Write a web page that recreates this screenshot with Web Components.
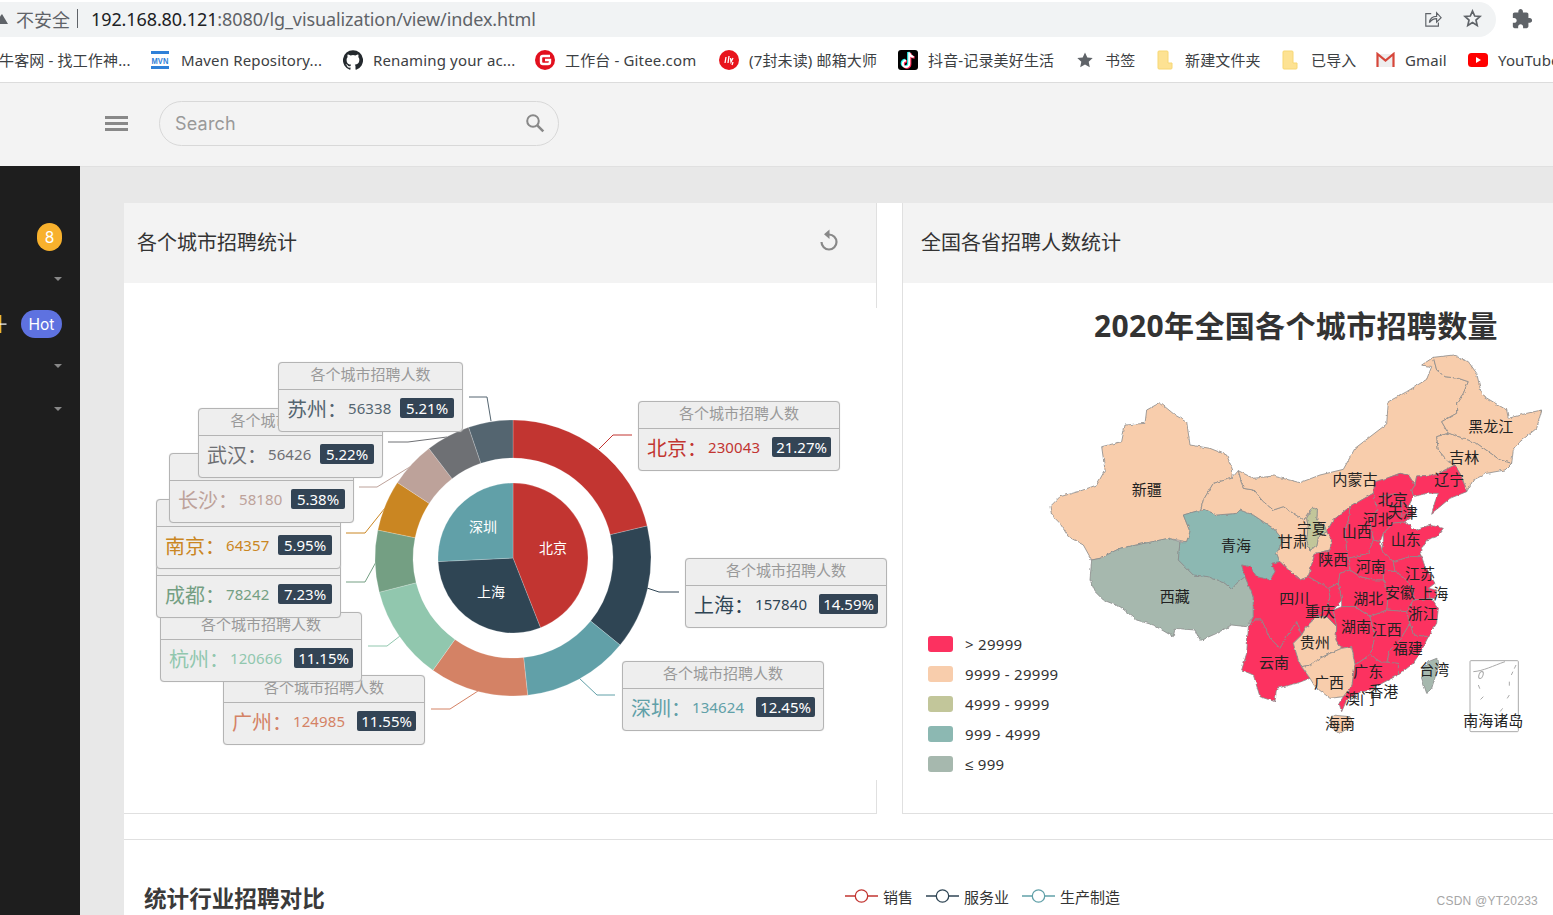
<!DOCTYPE html>
<html lang="zh">
<head>
<meta charset="utf-8">
<title>index</title>
<style>
  html, body { margin: 0; height: 915px; overflow: hidden; background: #fff; }
  body { font-family: "Noto Sans", "Noto Sans CJK SC", sans-serif; color: #333; }
</style>
</head>
<body>
<app-shell>
  <browser-bar>
    <book-mark w="152"><span>牛客网 - 找工作神...</span></book-mark>
    <book-mark w="192"><svg slot="icon" width="18" height="18" viewBox="0 0 18 18"><rect y="0" width="18" height="3" fill="#2f80d8"/><rect y="15" width="18" height="3" fill="#2f80d8"/><text x="9" y="12.8" text-anchor="middle" font-size="9.5" font-weight="700" textLength="17" lengthAdjust="spacingAndGlyphs" fill="#2f80d8" font-family="Liberation Sans">MVN</text></svg>Maven Repository...</book-mark>
    <book-mark w="192"><svg slot="icon" width="20" height="20" viewBox="0 0 24 24"><path fill="#24292e" d="M12 .3a12 12 0 0 0-3.8 23.4c.6.1.8-.3.8-.6v-2c-3.3.7-4-1.6-4-1.6-.6-1.4-1.4-1.8-1.4-1.8-1-.7.1-.7.1-.7 1.2 0 1.9 1.2 1.9 1.2 1 1.8 2.8 1.3 3.5 1 0-.8.4-1.3.7-1.6-2.7-.3-5.5-1.3-5.5-6 0-1.2.5-2.3 1.3-3.1-.2-.4-.6-1.6 0-3.2 0 0 1-.3 3.4 1.2a11.5 11.5 0 0 1 6 0c2.3-1.5 3.3-1.2 3.3-1.2.6 1.6.2 2.8 0 3.2.9.8 1.3 1.9 1.3 3.2 0 4.6-2.8 5.6-5.5 5.9.5.4.9 1 .9 2.2v3.3c0 .3.1.7.8.6A12 12 0 0 0 12 .3"/></svg>Renaming your ac...</book-mark>
    <book-mark w="184"><svg slot="icon" width="20" height="20" viewBox="0 0 20 20"><circle cx="10" cy="10" r="10" fill="#e2101e"/><path d="M15 6H8a2 2 0 0 0-2 2v4a2 2 0 0 0 2 2h5a2 2 0 0 0 2-2v-2H10" fill="none" stroke="#fff" stroke-width="2.4"/></svg>工作台 - Gitee.com</book-mark>
    <book-mark w="179"><svg slot="icon" width="20" height="20" viewBox="0 0 20 20"><circle cx="10" cy="10" r="10" fill="#e8141c"/><path d="M6 13l1-6M9 13l1-7M11.5 8l.5 4 2-4M14 12l-1 3" fill="none" stroke="#fff" stroke-width="1.3"/></svg>(7封未读) 邮箱大师</book-mark>
    <book-mark w="179"><svg slot="icon" width="20" height="20" viewBox="0 0 20 20"><rect width="20" height="20" rx="3" fill="#010101"/><g transform="translate(-2.500 -2.500) scale(1.250)"><path d="M11 4v9a2.6 2.6 0 1 1-2.6-2.6M11 4c.3 2 1.7 3.3 3.6 3.500" fill="none" stroke="#25f4ee" stroke-width="2" transform="translate(-.7 -.5)"/><path d="M11 4v9a2.6 2.6 0 1 1-2.6-2.6M11 4c.3 2 1.7 3.3 3.6 3.500" fill="none" stroke="#fe2c55" stroke-width="2" transform="translate(.7 .5)"/><path d="M11 4v9a2.6 2.6 0 1 1-2.6-2.6M11 4c.3 2 1.7 3.3 3.6 3.500" fill="none" stroke="#fff" stroke-width="1.600"/></g></svg>抖音-记录美好生活</book-mark>
    <book-mark w="80" i="18"><svg slot="icon" width="16" height="16" viewBox="0 0 16 16"><path fill="#5f6368" d="M8 .5l2.3 5 5.4.6-4 3.7 1.1 5.400L8 12.400l-4.800 2.800 1.100-5.400-4-3.700 5.400-.6z"/></svg>书签</book-mark>
    <book-mark w="125" i="18"><svg slot="icon" width="16" height="20" viewBox="0 0 16 20"><path fill="#fde293" stroke="#f7d774" d="M1 2a1 1 0 0 1 1-1h8a1 1 0 0 1 1 1v11h4v5a1 1 0 0 1-1 1H2a1 1 0 0 1-1-1z"/></svg>新建文件夹</book-mark>
    <book-mark w="94" i="19"><svg slot="icon" width="16" height="20" viewBox="0 0 16 20"><path fill="#fde293" stroke="#f7d774" d="M1 2a1 1 0 0 1 1-1h8a1 1 0 0 1 1 1v11h4v5a1 1 0 0 1-1 1H2a1 1 0 0 1-1-1z"/></svg>已导入</book-mark>
    <book-mark w="92" i="19"><svg slot="icon" width="19" height="15" viewBox="0 0 19 15"><path fill="#eee" d="M2 2h15v13H2z"/><path fill="none" stroke="#d6463a" stroke-width="2.200" d="M1.500 15V2l8 6.500L17.500 2v13"/></svg>Gmail</book-mark>
    <book-mark w="92"><svg slot="icon" width="20" height="14" viewBox="0 0 20 14"><rect width="20" height="14" rx="3.500" fill="#f00"/><path fill="#fff" d="M8 4l5 3-5 3z"/></svg>YouTube</book-mark>
  </browser-bar>
  <top-nav></top-nav>
  <div slot="main">
    <side-nav></side-nav>
    <page-body>
      <panel-card slot="left" caption="各个城市招聘统计" refresh><donut-chart></donut-chart></panel-card>
      <panel-card slot="right" caption="全国各省招聘人数统计" wide><china-map></china-map></panel-card>
      <compare-strip slot="bottom"></compare-strip>
    </page-body>
  </div>
</app-shell>

<script>
class AppShell extends HTMLElement {
  constructor() {
    super();
    this.attachShadow({ mode: "open" }).innerHTML = `
      <style>
        :host { display: flex; flex-direction: column; height: 915px; width: 1553px; overflow: hidden; }
        ::slotted([slot="main"]) { display: flex; flex: 1; min-height: 0; }
      </style>
      <slot></slot>
      <slot name="main"></slot>`;
  }
}

class BrowserBar extends HTMLElement {
  constructor() {
    super();
    this.attachShadow({ mode: "open" }).innerHTML = `
      <style>
        :host { display: block; background: #fff; }
        .top { display: flex; align-items: center; height: 37px; }
        .addr {
          width: 1496px; height: 35px; margin-top: 2px; background: #f1f3f4; padding-bottom: 2px;
          border-radius: 0 18px 18px 0; display: flex; align-items: center;
          font-size: 18px; color: #5f6368; white-space: nowrap; box-sizing: border-box;
        }
        .warn { width: 8px; height: 12px; margin-right: 8px; flex: none; }
        .sep { margin: 0 13px 0 7px; width: 1px; height: 19px; background: #5f6368; }
        .host { color: #202124; }
        .url { letter-spacing: -.1px; }
        .tools { margin-left: auto; display: flex; align-items: center; gap: 21px; padding-right: 14px; }
        .puzzle { margin-left: 15px; }
        .marks { display: flex; height: 45px; margin-left: -1px; border-bottom: 1px solid #dcdcdc; box-sizing: content-box; overflow: hidden; }
      </style>
      <div class="top">
        <div class="addr">
          <svg class="warn" viewBox="0 0 8 12"><path d="M-6 11 2 1 8 11z" fill="#5f6368"/></svg>
          <span>不安全</span><span class="sep"></span>
          <span class="url"><span class="host">192.168.80.121</span>:8080/lg_visualization/view/index.html</span>
          <div class="tools">
            <svg width="18" height="18" viewBox="0 0 20 20" fill="none" stroke="#5f6368" stroke-width="1.300"><path d="M8 4H2v14h14v-4"/><path d="M6 14c.5-4 3-7 8-7V3l5 5.500-5 5v-4c-3 0-6 1.500-8 4.500z"/></svg>
            <svg width="19" height="19" viewBox="0 0 19 19" fill="none" stroke="#5f6368" stroke-width="1.700"><path d="M9.500 2l2.200 5 5.300.5-4 3.600 1.200 5.300-4.700-2.800-4.700 2.800 1.200-5.300-4-3.600 5.300-.5z"/></svg>
          </div>
        </div>
        <svg class="puzzle" width="22" height="22" viewBox="0 0 24 24"><path fill="#5f6368" d="M20.500 11H19V7c0-1.100-.9-2-2-2h-4V3.500C13 2.120 11.880 1 10.500 1S8 2.120 8 3.500V5H4c-1.100 0-1.990.9-1.990 2v3.800H3.500c1.490 0 2.700 1.210 2.700 2.700s-1.210 2.700-2.700 2.700H2V20c0 1.100.9 2 2 2h3.800v-1.500c0-1.490 1.210-2.700 2.700-2.700 1.490 0 2.700 1.210 2.700 2.700V22H17c1.100 0 2-.9 2-2v-4h1.500c1.380 0 2.500-1.120 2.500-2.500S21.880 11 20.500 11z"/></svg>
      </div>
      <div class="marks"><slot></slot></div>`;
  }
}

class BookMark extends HTMLElement {
  constructor() {
    super();
    this.attachShadow({ mode: "open" }).innerHTML = `
      <style>
        :host {
          display: flex; align-items: center; flex: none; height: 45px;
          font-size: 15px; letter-spacing: .15px; color: #3c4043; white-space: nowrap;
        }
        .ico { display: flex; align-items: center; margin-right: 10px; width: 20px; }
        .ico:not(.on) { display: none; }
      </style>
      <span class="ico"><slot name="icon"></slot></span><slot></slot>`;
  }
  connectedCallback() {
    this.style.width = this.getAttribute("w") + "px";
    const ico = this.shadowRoot.querySelector(".ico");
    if (this.querySelector('[slot="icon"]')) ico.classList.add("on");
    if (this.hasAttribute("i")) ico.style.width = this.getAttribute("i") + "px";
  }
}

class TopNav extends HTMLElement {
  constructor() {
    super();
    this.attachShadow({ mode: "open" }).innerHTML = `
      <style>
        :host {
          display: flex; align-items: center; height: 84px; box-sizing: border-box;
          background: #f3f3f3; border-bottom: 1px solid #e0e0e0; padding: 0 0 3px 105px; flex: none;
        }
        .burger { width: 23px; height: 15px; display: flex; flex-direction: column; justify-content: space-between; margin-right: 31px; }
        .burger i { display: block; height: 3px; background: #888; }
        .search {
          width: 400px; height: 45px; box-sizing: border-box; border: 1px solid #d8d8d8; border-radius: 23px;
          display: flex; align-items: center; justify-content: space-between; padding: 0 13px 0 15px;
          font: 18px Inter, "Noto Sans", sans-serif; letter-spacing: .2px; color: #999;
        }
      </style>
      <div class="burger"><i></i><i></i><i></i></div>
      <div class="search"><span>Search</span>
        <svg width="20" height="20" viewBox="0 0 20 20" fill="none" stroke="#888" stroke-width="2"><circle cx="8" cy="8" r="5.800"/><path d="M12.300 12.300l6 6" stroke-width="2.600"/></svg>
      </div>`;
  }
}

class SideNav extends HTMLElement {
  constructor() {
    super();
    this.attachShadow({ mode: "open" }).innerHTML = `
      <style>
        :host {
          display: flex; flex-direction: column; align-items: flex-end; flex: none; width: 80px; margin-top: -1px;
          background: #1e1e1e; padding: 57px 18px 0 0; box-sizing: border-box;
        }
        .badge {
          height: 28px; border-radius: 14px; color: #fff; display: flex; align-items: center; justify-content: center;
          font: 15.500px Inter, "Noto Sans", sans-serif; box-sizing: border-box;
        }
        .eight { width: 25px; background: #f8b12d; border-radius: 12.500px; }
        .hot { width: 41px; background: #5e72e0; }
        .tri { width: 0; height: 0; border: 4px solid transparent; border-top: 4.500px solid #888; border-bottom: 0; }
        .row { display: flex; align-self: stretch; justify-content: space-between; align-items: center; margin-top: 29px; }
        .cut { display: block; }
      </style>
      <span class="badge eight">8</span>
      <span class="tri" style="margin-top:26px;margin-right:0"></span>
      <div class="row">
        <svg class="cut" width="7" height="18" viewBox="0 0 7 18"><path d="M0 0h1.300v18H0z" fill="#f2b632"/><path d="M0 8.500h6.500v1.200H0z" fill="#fff"/></svg>
        <span class="badge hot">Hot</span>
      </div>
      <span class="tri" style="margin-top:26px"></span>
      <span class="tri" style="margin-top:39px"></span>`;
  }
}

class PageBody extends HTMLElement {
  constructor() {
    super();
    this.attachShadow({ mode: "open" }).innerHTML = `
      <style>
        :host { display: block; flex: 1; background: #e8e8e8; padding: 36px 0 0 44px; min-width: 0; }
        .sheet { background: #fff; height: 100%; }
        .cards { display: flex; gap: 25px; height: 611px; }
        .gap { height: 25px; }
      </style>
      <div class="sheet">
        <div class="cards"><slot name="left"></slot><slot name="right"></slot></div>
        <div class="gap"></div>
        <slot name="bottom"></slot>
      </div>`;
  }
}

class PanelCard extends HTMLElement {
  constructor() {
    super();
    this.attachShadow({ mode: "open" }).innerHTML = `
      <style>
        :host { display: flex; flex-direction: column; width: 753px; box-sizing: border-box; border-bottom: 1px solid #e0e0e0; border-right: 1px solid #e0e0e0; flex: none; }
        :host([wide]) { width: 651px; border-right: 0; border-left: 1px solid #e0e0e0; }
        header {
          height: 80px; background: #f3f3f3; display: flex; align-items: center; justify-content: space-between;
          padding: 0 37px 3px 13px; font-size: 20px; color: #333; flex: none; box-sizing: border-box;
        }
        :host([wide]) header { padding-left: 18px; }
        .re { margin-top: -3px; }
        .body { flex: 1; min-height: 0; }
      </style>
      <header><span class="cap"></span>
        <svg class="re" width="20" height="24" viewBox="0 0 20 24" fill="none"><path d="M10 6.500a7.500 7.500 0 1 1-7.500 7.500" stroke="#888" stroke-width="2.200"/><path d="M10.500 1.500v9.500L5 6.300z" fill="#888"/></svg>
      </header>
      <div class="body"><slot></slot></div>`;
  }
  connectedCallback() {
    this.shadowRoot.querySelector(".cap").textContent = this.getAttribute("caption");
    if (!this.hasAttribute("refresh")) this.shadowRoot.querySelector(".re").remove();
  }
}

class CityLabel extends HTMLElement {
  constructor() {
    super();
    this.attachShadow({ mode: "open" }).innerHTML = `
      <style>
        :host {
          position: absolute; display: block; box-sizing: border-box; background: #eee; border: 1px solid #b4b4b4;
          border-radius: 4px; box-shadow: 0 0 1px #ccc;
        }
        .t {
          height: 26px; line-height: 23px; text-align: center; color: #999; font-size: 15px;
          border-bottom: 1px solid #b4b4b4; box-sizing: content-box;
        }
        .r { display: flex; align-items: center; height: 36px; padding: 0 8px 5px; white-space: nowrap; }
        .n { font-size: 20px; width: 61px; flex: none; }
        .v { font-size: 15px; letter-spacing: .1px; }
        .p {
          margin-left: auto; background: #334455; color: #fff; font-size: 15px; line-height: 20px;
          border-radius: 2px; padding: 0 4px; min-width: 46px; text-align: center;
        }
      </style>
      <div class="t">各个城市招聘人数</div>
      <div class="r"><span class="n"></span><span class="v"></span><span class="p"></span></div>`;
  }
  connectedCallback() {
    const s = this.shadowRoot;
    s.querySelector(".n").textContent = this.getAttribute("name") + "：";
    s.querySelector(".v").textContent = this.getAttribute("value");
    s.querySelector(".p").textContent = this.getAttribute("pct");
    s.querySelector(".r").style.color = this.getAttribute("color");
  }
}

class DonutChart extends HTMLElement {
  constructor() {
    super();
    this.attachShadow({ mode: "open" });
  }
  arc(cx, cy, r0, r1, a0, a1) {
    const p = (r, a) => `${(cx + r * Math.sin(a)).toFixed(2)} ${(cy - r * Math.cos(a)).toFixed(2)}`;
    const big = a1 - a0 > Math.PI ? 1 : 0;
    if (!r0) return `M${cx} ${cy}L${p(r1, a0)}A${r1} ${r1} 0 ${big} 1 ${p(r1, a1)}Z`;
    return `M${p(r0, a0)}L${p(r1, a0)}A${r1} ${r1} 0 ${big} 1 ${p(r1, a1)}L${p(r0, a1)}A${r0} ${r0} 0 ${big} 0 ${p(r0, a0)}Z`;
  }
  connectedCallback() {
    // x, y, w are page coordinates read off the reference
    const cities = [
      { n: "北京", v: 230043, p: "21.27%", c: "#c23531", x: 638, y: 401, w: 202, line: "599,449 613,435 632,435" },
      { n: "上海", v: 157840, p: "14.59%", c: "#2f4554", x: 685, y: 558, w: 202, line: "647,588 659,592 679,592" },
      { n: "深圳", v: 134624, p: "12.45%", c: "#61a0a8", x: 622, y: 661, w: 202, line: "579,678 597,695 615,695" },
      { n: "广州", v: 124985, p: "11.55%", c: "#d48265", x: 223, y: 675, w: 202, line: "478,691 450,709 431,709" },
      { n: "杭州", v: 120666, p: "11.15%", c: "#91c7ae", x: 160, y: 612, w: 202, line: "400,636 387,646 368,646" },
      { n: "成都", v: 78242, p: "7.23%", c: "#749f83", x: 156, y: 548, w: 185, line: "376,562 365,582 346,582" },
      { n: "南京", v: 64357, p: "5.95%", c: "#ca8622", x: 156, y: 499, w: 185, line: "385,508 365,533 346,533" },
      { n: "长沙", v: 58180, p: "5.38%", c: "#bda29a", x: 169, y: 453, w: 185, line: "413,465 377,487 359,487" },
      { n: "武汉", v: 56426, p: "5.22%", c: "#6e7074", x: 198, y: 408, w: 185, line: "447,437 408,442 388,442" },
      { n: "苏州", v: 56338, p: "5.21%", c: "#546570", x: 278, y: 362, w: 185, line: "491,421 487,397 469,397" },
    ];
    const inner = cities.slice(0, 3);
    const sum = (l) => l.reduce((a, c) => a + c.v, 0);
    const slices = (list, r0, r1) => {
      const total = sum(list);
      let a = 0;
      return list.map((c) => {
        const b = a + (c.v / total) * Math.PI * 2;
        const d = this.arc(513, 558, r0, r1, a, b);
        a = b;
        return `<path d="${d}" fill="${c.c}" stroke="#fff" stroke-opacity=".35" stroke-width=".6"/>`;
      }).join("");
    };
    const lines = cities.map((c) => `<polyline points="${c.line}" fill="none" stroke="${c.c}"/>`).join("");
    const labels = cities.map((c) =>
      `<city-label name="${c.n}" value="${c.v}" pct="${c.p}" color="${c.c}" style="left:${c.x - 124}px;top:${c.y - 308}px;width:${c.w}px"></city-label>`
    ).join("");
    this.shadowRoot.innerHTML = `
      <style>
        :host { display: block; position: relative; height: 472px; margin: 25px -1px 0 0; background: #fff; }
        svg { display: block; }
        text { font-size: 14px; fill: #fff; text-anchor: middle; font-family: "Noto Sans CJK SC", sans-serif; }
      </style>
      <svg width="753" height="472" viewBox="124 308 753 472">
        ${lines}
        ${slices(cities, 100, 138)}
        ${slices(inner, 0, 75)}
        <text x="553" y="553">北京</text>
        <text x="491" y="597">上海</text>
        <text x="483" y="532">深圳</text>
      </svg>
      ${labels}`;
  }
}

const PEACH = "#f8cdac", RED = "#fc3160", OLIVE = "#c2c69a", TEAL = "#8cb8b2", SAGE = "#a6b8ae";
// polygons are traced at three times the page scale, see the viewBox below
const PROVINCES = [
  [PEACH, "30,470 60,440 115,425 170,405 195,360 185,290 245,275 255,225 315,220 320,180 360,158 405,195 440,215 450,285 510,295 560,315 578,360 575,385 520,400 490,450 482,480 430,495 450,545 440,575 385,565 315,580 240,595 180,625 155,630 130,585 85,560 60,520 35,495"],
  [SAGE, "155,630 180,625 240,595 315,580 385,565 420,575 415,630 460,675 505,680 555,700 575,718 590,700 615,680 640,740 640,800 620,830 575,825 530,850 480,872 465,840 405,835 400,860 340,825 290,810 240,770 190,750 165,725 150,690"],
  [TEAL, "430,495 482,480 495,478 530,495 590,490 600,480 640,495 700,535 730,570 710,610 720,635 695,640 705,665 690,690 650,680 630,650 605,645 615,680 590,700 575,718 555,700 505,680 460,675 415,630 420,575 440,575 450,545"],
  [PEACH, "575,385 595,362 610,415 640,420 670,455 700,480 730,470 760,490 790,510 810,480 800,505 805,530 800,570 810,600 830,590 835,560 860,545 875,570 870,600 825,610 805,680 780,690 750,665 720,635 710,610 730,570 700,535 640,495 600,480 590,490 530,495 495,478 482,480 490,450 520,400"],
  [PEACH, "595,362 640,385 700,378 780,398 840,375 910,358 945,295 1040,222 1045,155 1100,125 1160,88 1175,50 1145,45 1180,22 1190,60 1215,80 1255,85 1285,95 1270,130 1250,160 1250,190 1205,215 1225,250 1190,260 1195,300 1225,335 1245,345 1235,350 1185,375 1130,378 1125,405 1105,375 1080,370 1040,385 1005,395 1000,430 930,470 880,510 860,545 835,560 855,530 830,510 832,480 818,472 810,480 790,510 760,490 730,470 700,480 670,455 640,420 610,415"],
  [PEACH, "1180,22 1240,15 1285,35 1310,70 1325,135 1400,180 1405,205 1460,190 1505,180 1490,235 1440,275 1420,300 1415,340 1380,330 1345,305 1310,280 1270,265 1225,250 1205,215 1250,190 1250,160 1270,130 1285,95 1255,85 1215,80 1190,60"],
  [PEACH, "1190,260 1225,250 1270,265 1310,280 1345,305 1380,330 1415,340 1395,360 1340,370 1300,390 1280,425 1265,380 1245,345 1225,335 1195,300"],
  [RED, "1130,378 1185,375 1235,350 1245,345 1265,380 1280,425 1230,445 1200,470 1175,490 1185,455 1195,430 1160,430 1120,440 1115,420 1125,405"],
  [RED, "1005,395 1040,385 1080,370 1105,375 1125,405 1115,420 1120,440 1105,470 1125,490 1095,515 1060,520 1030,550 1020,575 1000,570 990,520 1010,480 1000,430"],
  [RED, "1020,440 1070,430 1085,460 1050,470"],
  [RED, "1085,460 1105,470 1110,490 1085,500"],
  [RED, "930,470 1000,430 1010,480 990,520 1000,570 985,610 925,625 920,610 915,540 925,510"],
  [RED, "860,545 880,510 930,470 925,510 915,540 920,610 925,625 930,660 900,670 895,700 865,715 805,680 825,610 870,600 875,570"],
  [OLIVE, "818,472 832,480 830,510 855,530 860,545 835,560 830,590 810,600 800,570 805,530 800,505"],
  [RED, "1030,575 1030,550 1060,520 1095,515 1125,540 1170,525 1210,535 1190,560 1160,570 1140,610 1145,620 1110,620 1060,635 1025,600"],
  [RED, "925,625 985,610 1000,570 1020,575 1025,600 1060,635 1065,665 1030,660 1030,690 1000,690 960,680 930,660"],
  [RED, "1060,635 1110,620 1145,620 1155,650 1185,700 1165,715 1170,745 1120,750 1115,710 1090,680 1065,665"],
  [RED, "1030,660 1065,665 1090,680 1115,710 1120,750 1100,785 1040,780 1045,730 1030,690"],
  [RED, "1165,715 1190,720 1185,745 1170,745"],
  [RED, "895,700 900,670 930,660 960,680 1000,690 1030,690 1045,730 1040,780 990,800 945,770 905,770 905,750"],
  [RED, "605,645 630,650 650,680 690,690 705,665 695,640 720,635 750,665 780,690 805,680 865,715 870,740 860,775 830,800 800,830 785,855 770,815 740,860 720,895 690,865 665,810 645,810 625,830 640,800 640,740 615,680"],
  [RED, "865,715 895,700 905,750 880,780 890,830 860,800 830,800 860,775 870,740"],
  [RED, "625,830 645,810 665,810 690,865 720,895 740,860 770,815 785,855 760,880 775,930 785,950 810,985 770,1000 710,1015 705,1055 660,1040 640,975 605,960 620,910"],
  [PEACH, "785,855 800,830 830,800 860,800 890,830 888,870 905,895 870,910 840,925 810,945 785,950 775,930 760,880"],
  [RED, "890,830 880,780 905,770 945,770 990,800 1005,860 995,900 990,915 945,945 935,890 905,895 888,870"],
  [RED, "990,800 1040,780 1100,785 1110,820 1080,870 1050,900 1040,940 1020,935 990,915 995,900 1005,860"],
  [RED, "1100,785 1120,750 1175,745 1195,775 1190,820 1165,860 1120,855 1110,820"],
  [RED, "1110,820 1120,855 1165,860 1145,900 1120,940 1075,975 1075,940 1040,940 1050,900 1080,870"],
  [PEACH, "785,950 810,945 840,925 870,910 905,895 935,890 945,945 940,980 935,1010 910,1040 870,1045 825,1010 810,985"],
  [RED, "945,945 990,915 1020,935 1075,940 1075,975 1035,995 990,1020 950,1030 920,1050 905,1085 897,1060 910,1040 935,1010 940,980"],
  [PEACH, "875,1095 930,1100 940,1125 900,1150 870,1130"],
  [SAGE, "1165,935 1190,925 1195,950 1175,1015 1160,1030 1145,985 1150,955"],
];
const PLACE_NAMES = [
  ["新疆",320,420],["西藏",404,740],["青海",588,588],["甘肃",758,575],["宁夏",815,535],["内蒙古",945,390],
  ["黑龙江",1352,230],["吉林",1273,322],["辽宁",1228,390],["北京",1058,450],["天津",1088,487],["河北",1013,510],
  ["山西",950,545],["山东",1097,568],["陕西",880,630],["河南",992,650],["江苏",1140,670],["安徽",1080,727],
  ["上海",1180,730],["湖北",985,745],["四川",763,747],["重庆",840,785],["浙江",1148,792],["湖南",948,830],
  ["江西",1040,840],["贵州",825,878],["福建",1103,895],["云南",702,938],["广东",985,965],["台湾",1183,958],
  ["广西",867,997],["香港",1030,1025],["澳门",960,1045],["海南",900,1122],["南海诸岛",1360,1113],
];

class ChinaMap extends HTMLElement {
  constructor() {
    super();
    const polys = PROVINCES.map(([f, pts]) => `<polygon points="${pts}" fill="${f}"/>`).join("");
    const names = PLACE_NAMES.map(([n, x, y]) => `<text x="${x}" y="${y + 16}">${n}</text>`).join("");
    const legend = [[RED, "> 29999"], [PEACH, "9999 - 29999"], [OLIVE, "4999 - 9999"], [TEAL, "999 - 4999"], [SAGE, '<span class="le">≤</span> 999']]
      .map(([c, t]) => `<li><i style="background:${c}"></i><span>${t}</span></li>`).join("");
    this.attachShadow({ mode: "open" }).innerHTML = `
      <style>
        :host { display: block; }
        h2 {
          margin: 0; height: 43px; padding: 24px 0 0 191px; line-height: 37px; font-size: 30px; font-weight: 700; letter-spacing: .35px;
          color: #333; font-family: "Noto Sans", "Noto Sans CJK SC", sans-serif; white-space: nowrap;
        }
        .row { display: flex; }
        ul { list-style: none; margin: 279px 0 0; padding: 0 0 0 25px; width: 137px; box-sizing: border-box; flex: none; white-space: nowrap; }
        li { display: flex; align-items: center; height: 30px; font-size: 15px; color: #333; letter-spacing: .3px; }
        li i { width: 25px; height: 16px; border-radius: 3px; margin-right: 12px; flex: none; }
        .le { font-family: "Liberation Sans", sans-serif; }
        svg { display: block; flex: none; }
        polygon { stroke: #8a8a8a; stroke-width: 2.400; stroke-linejoin: round; }
        text { font-size: 45px; fill: #222; text-anchor: middle; font-family: "Noto Sans CJK SC", sans-serif; }
      </style>
      <h2>2020年全国各个城市招聘数量</h2>
      <div class="row">
        <ul>${legend}</ul>
        <svg width="513" height="400" viewBox="0 0 1539 1200">
          <defs><filter id="rough" x="-2%" y="-2%" width="104%" height="104%">
            <feTurbulence type="fractalNoise" baseFrequency=".07" numOctaves="2" seed="4"/>
            <feDisplacementMap in="SourceGraphic" scale="9" xChannelSelector="R" yChannelSelector="G"/>
          </filter></defs>
          <g filter="url(#rough)">${polys}</g>
          <g fill="none" stroke="#aaa" stroke-width="3">
            <rect x="1290" y="932" width="145" height="213" rx="3"/>
            <path d="M1300 965c30-2 60-18 95-30"/>
            <ellipse cx="1323" cy="975" rx="6" ry="11" transform="rotate(20 1323 975)"/>
            <path stroke-dasharray="12 10" d="M1315 1005l8 20M1330 1040l-15 15M1408 995v20M1408 1035l-10 16M1428 945l-14 30M1388 1075l-14 18"/>
          </g>
          ${names}
        </svg>
      </div>`;
  }
}

class CompareStrip extends HTMLElement {
  constructor() {
    super();
    const item = (c, t) => `<span class="it"><svg width="33" height="16" viewBox="0 0 33 16"><path d="M0 8h33" stroke="${c}" stroke-width="1.500"/><circle cx="16.500" cy="8" r="6.200" fill="#fff" stroke="${c}" stroke-width="1.300"/></svg>${t}</span>`;
    this.attachShadow({ mode: "open" }).innerHTML = `
      <style>
        :host {
          display: flex; align-items: flex-start; border-top: 1px solid #e0e0e0; padding: 43px 0 0 20px; height: 80px; box-sizing: border-box; position: relative;
        }
        h3 { margin: 0; width: 701px; flex: none; font-size: 22.600px; line-height: 30px; font-weight: 700; color: #3a3a3a; font-family: "Noto Sans CJK SC", sans-serif; }
        .lg { display: flex; font-size: 15px; color: #333; margin-top: -1px; }
        .it { display: flex; align-items: center; gap: 5px; height: 28px; margin-right: 13px; white-space: nowrap; }
        .mark { position: absolute; right: 15px; top: 54px; font: 12px "Liberation Sans", sans-serif; letter-spacing: .25px; color: #a6a6a6; }
      </style>
      <h3>统计行业招聘对比</h3>
      <div class="lg">${item("#c23531", "销售")}${item("#2f4554", "服务业")}${item("#61a0a8", "生产制造")}</div>
      <span class="mark">CSDN @YT20233</span>`;
  }
}

customElements.define("app-shell", AppShell);
customElements.define("browser-bar", BrowserBar);
customElements.define("book-mark", BookMark);
customElements.define("top-nav", TopNav);
customElements.define("side-nav", SideNav);
customElements.define("page-body", PageBody);
customElements.define("panel-card", PanelCard);
customElements.define("city-label", CityLabel);
customElements.define("donut-chart", DonutChart);
customElements.define("china-map", ChinaMap);
customElements.define("compare-strip", CompareStrip);
</script>
</body>
</html>
